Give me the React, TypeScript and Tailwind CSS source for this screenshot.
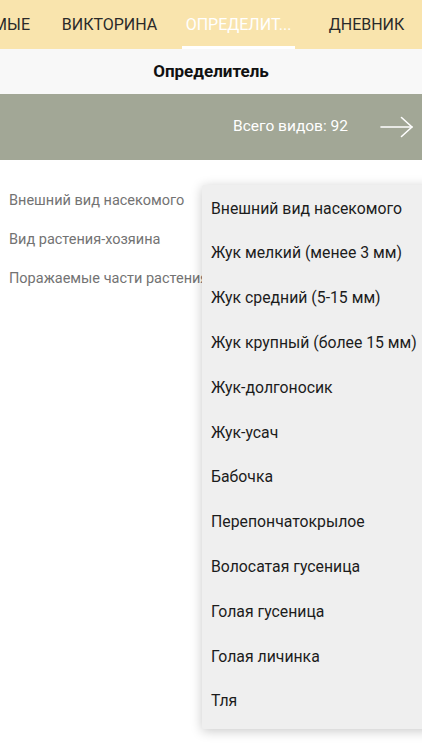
import React from "react";

const filters = ["Внешний вид насекомого", "Вид растения-хозяина", "Поражаемые части растения"];

const options = [
  "Внешний вид насекомого",
  "Жук мелкий (менее 3 мм)",
  "Жук средний (5-15 мм)",
  "Жук крупный (более 15 мм)",
  "Жук-долгоносик",
  "Жук-усач",
  "Бабочка",
  "Перепончатокрылое",
  "Волосатая гусеница",
  "Голая гусеница",
  "Голая личинка",
  "Тля",
];

export default function App() {
  return (
    <div
      className="relative w-[422px] h-[750px] overflow-hidden bg-white"
      style={{ fontFamily: "Roboto, 'Noto Sans', sans-serif" }}
    >
      {/* Tabs */}
      <div className="h-[49px] bg-[#f9e4ad] flex items-stretch overflow-hidden text-[16px] text-[#2a2a2a] whitespace-nowrap">
        <div className="shrink-0 -ml-[100px] w-[146px] flex items-center justify-end pr-[16px]">ИЗУЧАЕМЫЕ</div>
        <div className="shrink-0 w-[127px] flex items-center justify-center">ВИКТОРИНА</div>
        <div className="shrink-0 ml-[9px] w-[113px] relative flex items-center justify-center text-white">
          ОПРЕДЕЛИТ...
          <div className="absolute left-0 right-0 bottom-0 h-[3px] bg-white" />
        </div>
        <div className="shrink-0 w-[143px] flex items-center justify-center">ДНЕВНИК</div>
      </div>

      {/* Title */}
      <div className="h-[45px] bg-[#f8f8f8] flex items-center justify-center text-[17px] font-bold text-[#111]">
        Определитель
      </div>

      {/* Summary band */}
      <div className="h-[66px] bg-[#a2a796] flex items-center justify-end pr-[8px]">
        <span className="text-white text-[15.5px] mr-[32px]">Всего видов: 92</span>
        <svg width="34" height="22" viewBox="0 0 34 22" fill="none" stroke="white" strokeWidth="1.6" strokeLinecap="round" strokeLinejoin="round">
          <path d="M1 11 H32" />
          <path d="M21.5 1.5 L32 11 L21.5 20.5" />
        </svg>
      </div>

      {/* Filters */}
      <div className="pt-[31px] px-[9px] flex flex-col gap-[19px]">
        {filters.map((f) => (
          <div key={f} className="text-[14.5px] text-[#737373] leading-[20px] whitespace-nowrap">
            {f}
          </div>
        ))}
      </div>

      {/* Dropdown */}
      <div className="absolute left-[202px] top-[185px] w-[230px] bg-[#efefef] shadow-[0_2px_12px_rgba(0,0,0,0.22)] rounded-[2px] pt-[1px] pb-[5px]">
        {options.map((o) => (
          <div key={o} className="h-[44.8px] flex items-center pl-[9px] text-[15.8px] text-[#1c1c1c] whitespace-nowrap">
            {o}
          </div>
        ))}
      </div>
    </div>
  );
}
